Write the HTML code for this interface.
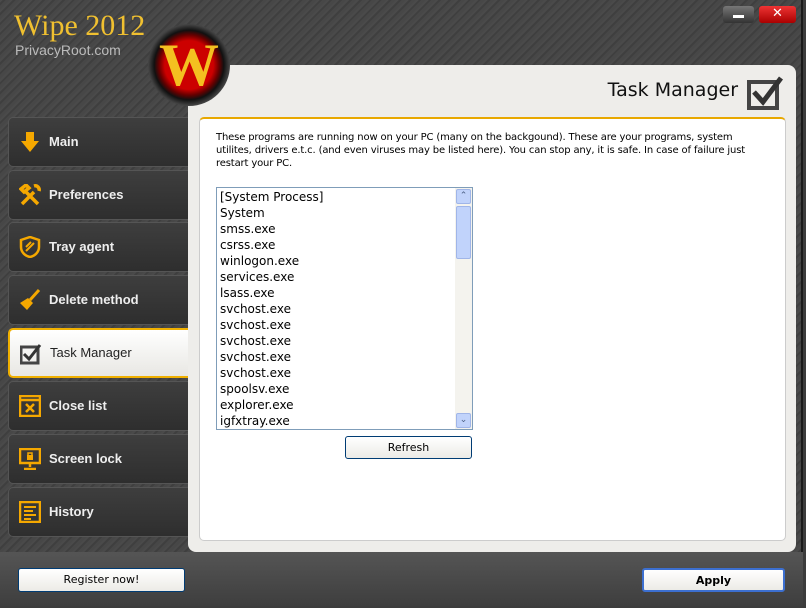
<!DOCTYPE html>
<html><head><style>
*{margin:0;padding:0;box-sizing:border-box}
body{width:806px;height:608px;overflow:hidden;font-family:"DejaVu Sans","Liberation Sans",sans-serif;background:#3c3c3c;position:relative}
.win{position:absolute;left:0;top:0;width:803px;height:606px;background:repeating-linear-gradient(135deg,#4a4a4a 0 2px,#3f3f3f 2px 4px,#474747 4px 7px);border-right:2px solid #1a1a1a;border-bottom:2px solid #1a1a1a}
.bottom{position:absolute;left:0;top:552px;width:803px;height:54px;background:linear-gradient(#555,#3e3e3e)}
.title{position:absolute;left:14px;top:9px;font-family:"Liberation Serif",serif;font-size:30px;color:#f0c030}
.sub{position:absolute;left:15px;top:42px;font-size:14px;color:#bbb;font-family:"Liberation Sans",sans-serif}
.logo{position:absolute;left:148px;top:24px;width:82px;height:82px;border-radius:50%;background:radial-gradient(circle,#c00 0 42%,#600 52%,#111 60%,#444 70%,#222 78%);}
.logo span{position:absolute;left:0;width:82px;top:10px;text-align:center;font-family:"Liberation Serif",serif;font-weight:bold;font-size:60px;color:#f4c020;line-height:62px}
.nav{position:absolute;left:8px;width:180px;height:50px;border-radius:5px 0 0 5px;background:linear-gradient(#3e3e3e,#2e2e2e);border:1px solid #555;border-right:none;color:#eee;font-size:13px;font-weight:bold;font-family:"Liberation Sans",sans-serif;line-height:48px;padding-left:40px}
.nav.act{background:linear-gradient(#fff,#e8e7e3);border:2px solid #f0b000;border-right:none;color:#222;font-weight:normal;line-height:46px}
.ic{position:absolute;left:10px;top:13px;width:22px;height:22px}
.panel{position:absolute;left:188px;top:65px;width:608px;height:487px;background:#eeedea;border-radius:0 8px 8px 8px}
.ptitle{position:absolute;right:58px;top:14px;font-size:19px;color:#111}
.inner{position:absolute;left:11px;top:52px;width:587px;height:424px;background:#fff;border:1px solid #ccc;border-top:2px solid #e8a800;border-radius:5px}
.desc{position:absolute;left:216px;top:131px;width:550px;font-size:10px;line-height:13px;color:#000;font-family:"DejaVu Sans",sans-serif;letter-spacing:-0.15px}
.list{position:absolute;left:216px;top:187px;width:257px;height:243px;border:1px solid #7f9db9;background:#fff;overflow:hidden}
.list div{font-size:12px;line-height:16px;padding-left:3px;color:#000}
.sb{position:absolute;right:0;top:0;width:17px;height:241px;background:#f4f3ee}
.btn{position:absolute;border:1px solid #003c74;border-radius:3px;background:linear-gradient(#fff,#ecebe6);font-size:11px;text-align:center;color:#000}
</style></head><body>
<div class="win"></div>
<div class="bottom"></div>
<div class="title">Wipe 2012</div>
<div class="sub">PrivacyRoot.com</div>
<div style="position:absolute;left:723px;top:6px;width:31px;height:17px;border-radius:3px;background:linear-gradient(#777,#333);"><div style="position:absolute;left:10px;top:9px;width:11px;height:3px;background:#fff"></div></div>
<div style="position:absolute;left:759px;top:6px;width:37px;height:17px;border-radius:3px;background:linear-gradient(#e33,#a00);color:#fff;font-size:13px;text-align:center;line-height:16px">✕</div>
<div class="panel"><div class="ptitle">Task Manager</div>
<svg style="position:absolute;left:558px;top:9px" width="38" height="40"><rect x="3" y="8" width="28" height="26" fill="none" stroke="#444" stroke-width="4"/><path d="M8 18 L17 28 L35 4" fill="none" stroke="#333" stroke-width="5"/></svg>
<div class="inner"></div></div>
<div class="logo"><span>W</span></div>

<div class="nav" style="top:117px"><svg class="ic" viewBox="0 0 22 22"><path d="M7 1h8v9h5l-9 11-9-11h5z" fill="#f5a800"/></svg>Main</div>
<div class="nav" style="top:170px"><svg class="ic" viewBox="0 0 22 22"><path d="M3 20L15 8M7 8L19 20M2 5l5-4 3 3-5 4zM15 2a4 4 0 0 1 5 5" stroke="#f5a800" stroke-width="3.5" fill="none"/></svg>Preferences</div>
<div class="nav" style="top:222px"><svg class="ic" viewBox="0 0 22 22"><path d="M11 1l9 3v7c0 5-4 9-9 10-5-1-9-5-9-10V4z" fill="none" stroke="#f5a800" stroke-width="2.5"/><path d="M7 15l8-8M7 11l5-5" stroke="#f5a800" stroke-width="2"/></svg>Tray agent</div>
<div class="nav" style="top:275px"><svg class="ic" viewBox="0 0 22 22"><path d="M20 1L11 11" stroke="#f5a800" stroke-width="3"/><path d="M9 9l5 5-6 7-7-7z" fill="#f5a800"/></svg>Delete method</div>
<div class="nav act" style="top:328px"><svg class="ic" viewBox="0 0 22 22"><rect x="1" y="4" width="17" height="16" fill="none" stroke="#444" stroke-width="3"/><path d="M4 11l5 5 11-14" stroke="#333" stroke-width="3" fill="none"/></svg>Task Manager</div>
<div class="nav" style="top:381px"><svg class="ic" viewBox="0 0 22 22"><rect x="1" y="1" width="20" height="20" fill="none" stroke="#f5a800" stroke-width="2.5"/><path d="M1 5h20M7 9l8 8M15 9l-8 8" stroke="#f5a800" stroke-width="2.5"/></svg>Close list</div>
<div class="nav" style="top:434px"><svg class="ic" viewBox="0 0 22 22"><rect x="1" y="1" width="20" height="14" fill="none" stroke="#f5a800" stroke-width="2.5"/><path d="M11 15v4M5 21h12" stroke="#f5a800" stroke-width="2.5"/><rect x="8" y="7" width="6" height="5" fill="#f5a800"/><path d="M9 7V5h4v2" stroke="#f5a800" fill="none" stroke-width="1.5"/></svg>Screen lock</div>
<div class="nav" style="top:487px"><svg class="ic" viewBox="0 0 22 22"><rect x="1" y="1" width="20" height="20" fill="none" stroke="#f5a800" stroke-width="2.5"/><path d="M5 6h12M5 10h9M5 14h12M5 18h7" stroke="#f5a800" stroke-width="2"/></svg>History</div>

<div class="desc">These programs are running now on your PC (many on the backgound). These are your programs, system utilites, drivers e.t.c. (and even viruses may be listed here). You can stop any, it is safe. In case of failure just restart your PC.</div>
<div class="list">
<div style="margin-top:1px">[System Process]</div><div>System</div><div>smss.exe</div><div>csrss.exe</div><div>winlogon.exe</div><div>services.exe</div><div>lsass.exe</div><div>svchost.exe</div><div>svchost.exe</div><div>svchost.exe</div><div>svchost.exe</div><div>svchost.exe</div><div>spoolsv.exe</div><div>explorer.exe</div><div>igfxtray.exe</div>
<div class="sb">
<div style="position:absolute;left:1px;top:1px;width:15px;height:15px;background:#c1d3fb;border:1px solid #a0b5e8;border-radius:2px;font-size:9px;color:#4d6185;text-align:center;line-height:13px;padding:0">⌃</div>
<div style="position:absolute;left:1px;top:18px;width:15px;height:53px;background:#c1d3fb;border:1px solid #a0b5e8;border-radius:2px;padding:0"></div>
<div style="position:absolute;left:1px;top:225px;width:15px;height:15px;background:#c1d3fb;border:1px solid #a0b5e8;border-radius:2px;font-size:9px;color:#4d6185;text-align:center;line-height:13px;padding:0">⌄</div>
</div></div>
<div class="btn" style="left:345px;top:436px;width:127px;height:23px;line-height:21px">Refresh</div>
<div class="btn" style="left:18px;top:568px;width:167px;height:24px;line-height:22px">Register now!</div>
<div class="btn" style="left:642px;top:568px;width:143px;height:24px;line-height:22px;font-weight:bold;border:2px solid #3c6fd0">Apply</div>
</body></html>
